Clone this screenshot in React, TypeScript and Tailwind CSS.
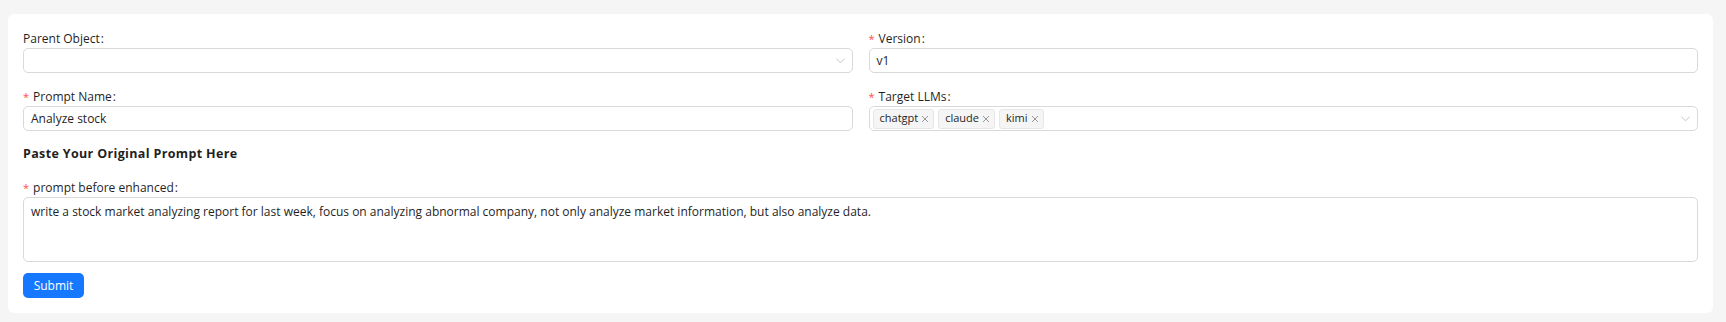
const font = "font-['Open_Sans','Noto_Sans',sans-serif]";

function Label({ text, required }: { text: string; required?: boolean }) {
  return (
    <div className="h-[19px] flex items-center text-[12px] text-[#1f1f1f] leading-none">
      {required && <span className="text-[#ff4d4f] mr-[4px] text-[11px]">*</span>}
      <span>{text}</span>
      <span className="ml-[1px] mr-[6px]">:</span>
    </div>
  );
}

function Chevron() {
  return (
    <svg width="11" height="11" viewBox="0 0 12 12" className="shrink-0">
      <path d="M1.5 4 L6 8.5 L10.5 4" fill="none" stroke="#bfbfbf" strokeWidth="1" />
    </svg>
  );
}

function Tag({ text }: { text: string }) {
  return (
    <span className="h-[20px] flex items-center gap-[3px] pl-[6px] pr-[4px] rounded-[3px] bg-[#f5f5f5] border border-[#e6e6e6] text-[11px] text-[#1f1f1f]">
      {text}
      <svg width="8" height="8" viewBox="0 0 8 8">
        <path d="M1 1 L7 7 M7 1 L1 7" stroke="#8c8c8c" strokeWidth="0.9" />
      </svg>
    </span>
  );
}

export default function App() {
  return (
    <div className={`min-h-screen bg-[#f5f5f5] pt-[14px] pl-[8px] pr-[13px] ${font}`}>
      <div className="bg-white rounded-[6px] px-[15px] pt-[15px] pb-[15px]">
        <div className="grid grid-cols-2 gap-x-[16px]">
          <div>
            <Label text="Parent Object" />
            <div className="h-[25px] border border-[#d9d9d9] rounded-[5px] flex items-center justify-end pr-[6px]">
              <Chevron />
            </div>
          </div>
          <div>
            <Label text="Version" required />
            <div className="h-[25px] border border-[#d9d9d9] rounded-[5px] flex items-center px-[7px] text-[12px] text-[#1f1f1f]">
              v1
            </div>
          </div>
          <div className="mt-[14px]">
            <Label text="Prompt Name" required />
            <div className="h-[25px] border border-[#d9d9d9] rounded-[5px] flex items-center px-[7px] text-[12px] text-[#1f1f1f]">
              Analyze stock
            </div>
          </div>
          <div className="mt-[14px]">
            <Label text="Target LLMs" required />
            <div className="h-[25px] border border-[#d9d9d9] rounded-[5px] flex items-center pl-[3px] pr-[6px]">
              <div className="flex items-center gap-[4px] flex-1">
                <Tag text="chatgpt" />
                <Tag text="claude" />
                <Tag text="kimi" />
              </div>
              <Chevron />
            </div>
          </div>
        </div>

        <div className="mt-[13px] h-[20px] flex items-center text-[12.5px] tracking-[0.35px] font-bold text-[#1f1f1f]">
          Paste Your Original Prompt Here
        </div>

        <div className="mt-[14px]">
          <Label text="prompt before enhanced" required />
          <div className="h-[65px] border border-[#d9d9d9] rounded-[5px] px-[7px] pt-[4px] text-[12px] leading-[20px] text-[#1f1f1f]">
            write a stock market analyzing report for last week, focus on analyzing abnormal company, not only analyze market information, but also analyze data.
          </div>
        </div>

        <button className="mt-[11px] h-[25px] w-[61px] rounded-[5px] bg-[#1677ff] text-white text-[12px] font-medium flex items-center justify-center">
          Submit
        </button>
      </div>
    </div>
  );
}
